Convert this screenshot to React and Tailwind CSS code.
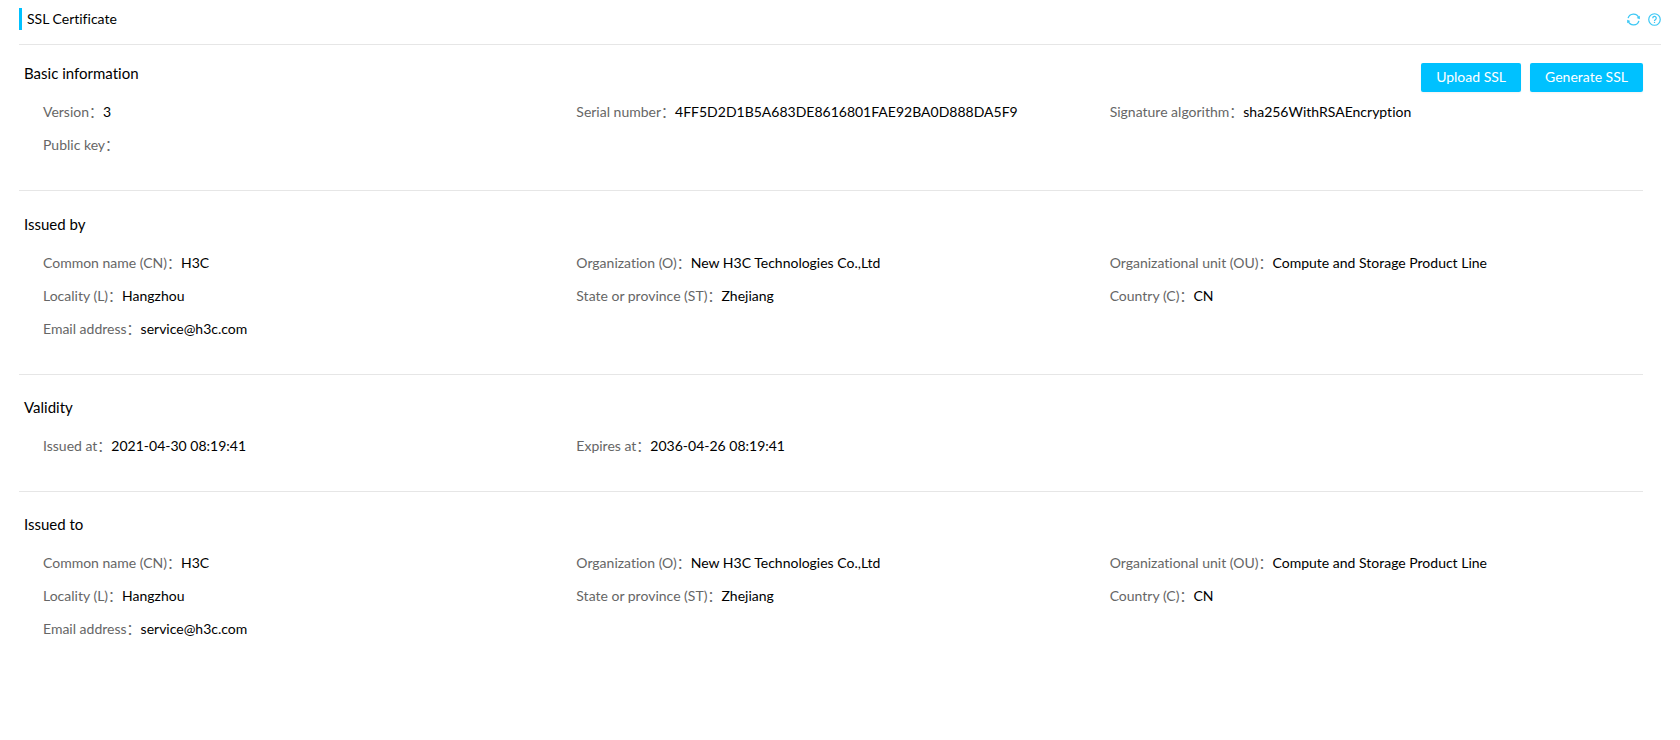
import React from 'react';

const issuer = [
  { label: 'Common name (CN)', value: 'H3C' },
  { label: 'Organization (O)', value: 'New H3C Technologies Co.,Ltd' },
  { label: 'Organizational unit (OU)', value: 'Compute and Storage Product Line' },
  { label: 'Locality (L)', value: 'Hangzhou' },
  { label: 'State or province (ST)', value: 'Zhejiang' },
  { label: 'Country (C)', value: 'CN' },
  { label: 'Email address', value: 'service@h3c.com' },
];

const basicInfo = [
  { label: 'Version', value: '3' },
  { label: 'Serial number', value: '4FF5D2D1B5A683DE8616801FAE92BA0D888DA5F9' },
  { label: 'Signature algorithm', value: 'sha256WithRSAEncryption' },
  { label: 'Public key', value: '' },
];

const validity = [
  { label: 'Issued at', value: '2021-04-30 08:19:41' },
  { label: 'Expires at', value: '2036-04-26 08:19:41' },
];

function RefreshIcon() {
  return (
    <svg viewBox="0 0 14 14" className="size-[13px]" fill="none" stroke="currentColor" strokeWidth="1.4">
      <path d="M1.2 5.6A6 6 0 0 1 12.6 5" />
      <path d="M12.8 8.4A6 6 0 0 1 1.4 9" />
      <path d="M13.8 3v3.6l-3.4-1.2z" fill="currentColor" stroke="none" />
      <path d="M.2 11V7.4l3.4 1.2z" fill="currentColor" stroke="none" />
    </svg>
  );
}

function HelpIcon() {
  return (
    <svg viewBox="0 0 14 14" className="size-[13px]" fill="none" stroke="currentColor" strokeWidth="1.3">
      <circle cx="7" cy="7" r="6.2" />
      <path d="M5.1 5.6a1.9 1.9 0 1 1 2.8 1.6c-.6.4-.9.7-.9 1.4" />
      <path d="M7 9.5v1.3" />
    </svg>
  );
}

function ActionButton({ children }) {
  return (
    <button
      type="button"
      className="h-[29px] rounded-xs bg-[#00c1ff] px-[15px] pb-0.5 text-sm text-white shadow-xs hover:bg-[#33cdff]"
    >
      {children}
    </button>
  );
}

function Section({ title, items, className = 'pt-[23px]', actions }) {
  return (
    <section className={`border-b border-[#e6e6e6] pb-[29px] last:border-b-0 ${className}`}>
      <div className="flex h-8 items-start justify-between">
        <h2 className="pl-[5px] text-[15px] leading-5 text-black">{title}</h2>
        {actions}
      </div>
      <dl className="grid grid-cols-3 pl-6">
        {items.map((item) => (
          <div key={item.label} className="flex text-sm leading-[33px] whitespace-nowrap">
            <dt className="text-[#666]">{item.label}：</dt>
            <dd className="text-black">{item.value}</dd>
          </div>
        ))}
      </dl>
    </section>
  );
}

export default function App() {
  return (
    <main
      lang="zh-CN"
      className="min-h-screen bg-white px-[19px] font-['Lato','Noto_Sans_CJK_SC',sans-serif] [font-variant-ligatures:none]"
    >
      <header className="flex h-[45px] items-start justify-between border-b border-[#e6e6e6] pt-2">
        <h1 className="border-l-3 border-[#00c1ff] pl-[5px] text-sm leading-[22px] text-black">
          SSL Certificate
        </h1>
        <div className="flex gap-2 pt-[5px] text-[#3cc8f5]">
          <button type="button" aria-label="Refresh">
            <RefreshIcon />
          </button>
          <button type="button" aria-label="Help">
            <HelpIcon />
          </button>
        </div>
      </header>

      <div className="pr-[18px]">
        <Section
          title="Basic information"
          items={basicInfo}
          className="pt-[18px]"
          actions={
            <div className="flex gap-[9px]">
              <ActionButton>Upload SSL</ActionButton>
              <ActionButton>Generate SSL</ActionButton>
            </div>
          }
        />
        <Section title="Issued by" items={issuer} />
        <Section title="Validity" items={validity} className="pt-[22px]" />
        <Section title="Issued to" items={issuer} className="pt-[22px]" />
      </div>
    </main>
  );
}
